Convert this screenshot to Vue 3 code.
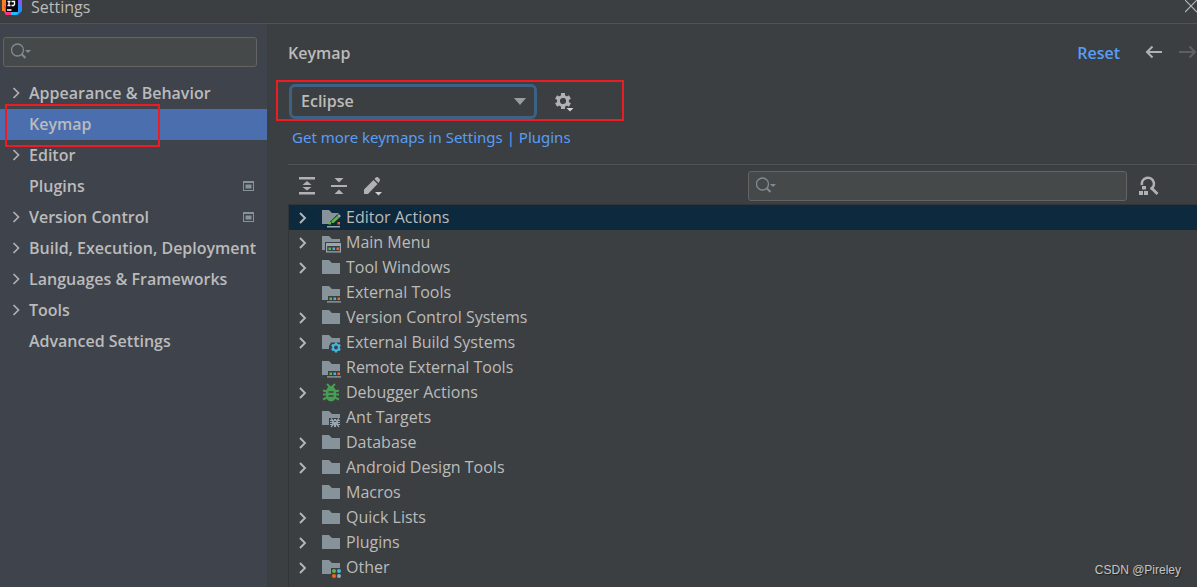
<script setup>
import { ref } from 'vue'

const categories = [
  { label: 'Appearance & Behavior', open: true },
  { label: 'Keymap', selected: true },
  { label: 'Editor', open: true },
  { label: 'Plugins', project: true },
  { label: 'Version Control', open: true, project: true },
  { label: 'Build, Execution, Deployment', open: true },
  { label: 'Languages & Frameworks', open: true },
  { label: 'Tools', open: true },
  { label: 'Advanced Settings' },
]

const actions = [
  { label: 'Editor Actions', open: true, icon: 'editor' },
  { label: 'Main Menu', open: true, icon: 'menu' },
  { label: 'Tool Windows', open: true, icon: 'folder' },
  { label: 'External Tools', icon: 'tools' },
  { label: 'Version Control Systems', open: true, icon: 'folder' },
  { label: 'External Build Systems', open: true, icon: 'build' },
  { label: 'Remote External Tools', icon: 'tools' },
  { label: 'Debugger Actions', open: true, icon: 'bug' },
  { label: 'Ant Targets', icon: 'ant' },
  { label: 'Database', open: true, icon: 'folder' },
  { label: 'Android Design Tools', open: true, icon: 'folder' },
  { label: 'Macros', icon: 'folder' },
  { label: 'Quick Lists', open: true, icon: 'folder' },
  { label: 'Plugins', open: true, icon: 'folder' },
  { label: 'Other', open: true, icon: 'other' },
]

const folderShapes = {
  folder: 'M1 2h7l3 3h8v11H1z',
  editor: 'M1 2h7l3 3h7l-9 9v2H1z',
  menu: 'M1 3h7l3 3h8v3H4v8H1z',
  tools: 'M1 3h7l3 3h8v7H7v4H1z',
  build: 'M1 2h7l3 3h8v4.500h-9L8 13v3H1z',
  ant: 'M1 3h7l3 3h8v4H8v7H1z',
  other: 'M1 2h7l3 3h8v5h-9v6H1z',
}

const keymap = ref('Eclipse')
const settingsQuery = ref('')
const actionQuery = ref('')
</script>

<template>
  <div class="window">
    <header class="titlebar">
      <svg class="logo" width="20" height="15" viewBox="0 0 20 15" aria-hidden="true">
        <path d="M0 0h9v15H4l-2-4H0z" fill="#fc801d" />
        <path d="M2 5l6 5 2 5H4z" fill="#fe2f7d" />
        <path d="M8 0h12l1 10-5 5H9z" fill="#1e8ff5" />
        <path d="M14 0h5v7z" fill="#7a5cf0" />
        <path d="M9 12l8-1-3 4H9z" fill="#18c3fb" />
        <path d="M4 0h12v12H4z" fill="#0b0509" />
        <path d="M5.500 1.500h3M7 1.500v4M5.500 5.500h3M9.500 1.500h3v3l-1 1H9.500M5 10h4.500" fill="none" stroke="#fff" stroke-width="1.300" />
      </svg>
      <h1 class="window-title">Settings</h1>
      <button class="icon-button close" aria-label="Close">
        <svg width="12" height="13" viewBox="0 0 12 13"><path d="M0 0l12 12M12 0L0 12" stroke="#b4b6b7" stroke-width="1.200" /></svg>
      </button>
    </header>

    <div class="body">
      <nav class="sidebar" aria-label="Settings categories">
        <div class="search">
          <svg width="22" height="18" viewBox="0 0 22 18" aria-hidden="true">
            <circle cx="6.500" cy="7" r="6" fill="none" stroke="#7f8b91" stroke-width="1.300" />
            <path d="M10.500 11l4 4" stroke="#7f8b91" stroke-width="2" /><path d="M14 7h6l-3 3z" fill="#7f8b91" />
          </svg>
          <input v-model="settingsQuery" type="text" aria-label="Search settings" />
        </div>
        <ul class="categories">
          <li v-for="item in categories" :key="item.label" :class="{ selected: item.selected }">
            <button class="category">
              <span class="chevron">
                <svg v-if="item.open" width="8" height="12" viewBox="0 0 8 12"><path d="M1.500 1l5 5-5 5" fill="none" stroke="#afb1b3" stroke-width="1.700" /></svg>
              </span>
              <span class="category-label">{{ item.label }}</span>
              <svg v-if="item.project" width="11" height="10" viewBox="0 0 11 10" aria-hidden="true">
                <path d="M0 0h11v10H0zM1 2v7h9V2z" fill="#87939a" fill-rule="evenodd" /><path d="M2.500 3.500h6v4h-6z" fill="#87939a" />
              </svg>
            </button>
            <span v-if="item.selected" class="mark mark-category"></span>
          </li>
        </ul>
      </nav>

      <main class="content">
        <div class="heading">
          <h2>Keymap</h2>
          <button class="reset">Reset</button>
          <button class="icon-button" aria-label="Back">
            <svg width="18" height="14" viewBox="0 0 18 14"><path d="M17 7H2M7.500 1.500L2 7l5.500 5.500" fill="none" stroke="#afb1b3" stroke-width="2" /></svg>
          </button>
          <button class="icon-button forward" aria-label="Forward" disabled>
            <svg width="18" height="14" viewBox="0 0 18 14"><path d="M0 7h16M10.500 1.500L16 7l-5.500 5.500" fill="none" stroke="#5d6062" stroke-width="2" /></svg>
          </button>
        </div>

        <div class="scheme">
          <div class="combo">
            <select v-model="keymap" aria-label="Keymap">
              <option>Eclipse</option>
            </select>
            <svg class="combo-arrow" width="12" height="7" viewBox="0 0 12 7" aria-hidden="true"><path d="M0 0h12L6 7z" fill="#9a9da0" /></svg>
          </div>
          <button class="icon-button" aria-label="Scheme actions">
            <svg width="20" height="20" viewBox="0 0 20 20">
              <path d="M7 1h4v16H7zM1.100 6.700l2-3.400 13.800 8-2 3.400zM1.100 11.300l2 3.400 13.800-8-2-3.400z" fill="#afb1b3" />
              <circle cx="9" cy="9" r="4.500" fill="none" stroke="#afb1b3" stroke-width="3" /><circle cx="9" cy="9" r="3" fill="#3c3f41" />
              <path d="M11.500 15h8v2L16 20l-4.500-3z" fill="#3c3f41" /><path d="M12.500 16h7L16 19.500z" fill="#d0d2d3" />
            </svg>
          </button>
          <span class="mark mark-scheme"></span>
        </div>
        <a class="more" href="#">Get more keymaps in Settings | Plugins</a>

        <div class="toolbar">
          <button class="icon-button" aria-label="Expand all">
            <svg width="16" height="20" viewBox="0 0 16 20"><path d="M0 1h16v2.500H0zM0 16h16v2.500H0zM8 5l4.500 4h-9zM8 14.500L3.500 11h9z" fill="#afb1b3" /></svg>
          </button>
          <button class="icon-button" aria-label="Collapse all">
            <svg width="16" height="20" viewBox="0 0 16 20"><path d="M0 9h16v2H0zM3.500 2h9L8 6.500zM3.500 18h9L8 13.500z" fill="#afb1b3" /></svg>
          </button>
          <button class="icon-button" aria-label="Edit shortcut">
            <svg width="20" height="20" viewBox="0 0 20 20"><path d="M1 18v-4.500L10.500 4l4 4L5 18zM11.500 3L13 1.300q1-.8 2 0l1.700 1.700q.8 1 0 2L15.500 7z" fill="#afb1b3" /><path d="M12 16h7l-3.500 3.500z" fill="#d0d2d3" /></svg>
          </button>
          <div class="search search-actions">
            <svg width="22" height="18" viewBox="0 0 22 18" aria-hidden="true">
              <circle cx="6.500" cy="7" r="6" fill="none" stroke="#7f8b91" stroke-width="1.300" />
              <path d="M10.500 11l4 4" stroke="#7f8b91" stroke-width="2" /><path d="M14 7h6l-3 3z" fill="#7f8b91" />
            </svg>
            <input v-model="actionQuery" type="text" aria-label="Search actions" />
          </div>
          <button class="icon-button" aria-label="Find actions by shortcut">
            <svg width="20" height="20" viewBox="0 0 20 20">
              <path d="M3 9A6 6 0 1 1 11.500 13.200" fill="none" stroke="#afb1b3" stroke-width="2.600" />
              <path d="M12.500 12l6 6" stroke="#afb1b3" stroke-width="2.800" />
              <path d="M3 10h4v3.500H3zM0 15h4v4H0zM5 15h4v4H5z" fill="#afb1b3" />
            </svg>
          </button>
        </div>

        <ul class="tree" role="tree" aria-label="Actions">
          <li v-for="(node, i) in actions" :key="node.label" role="treeitem" :aria-selected="i === 0" :class="{ current: i === 0 }">
            <span class="chevron">
              <svg v-if="node.open" width="8" height="12" viewBox="0 0 8 12"><path d="M1 1l5 5-5 5" fill="none" stroke="#b4b6b7" stroke-width="1.900" /></svg>
            </span>
            <svg class="node-icon" width="20" height="20" viewBox="0 0 20 20" aria-hidden="true">
              <path v-if="folderShapes[node.icon]" :d="folderShapes[node.icon]" fill="#87939a" />
              <g v-if="node.icon === 'editor'">
                <path d="M9 14l7-7 3 3-6 6H8z" fill="#0d293e" />
                <path d="M10.500 15v-2L16 8l2 2-5.500 5z" fill="#62b543" /><path d="M17 7l2 2" stroke="#9aa7b0" stroke-width="2.500" />
                <path d="M7.500 14h2.500v2.500H7.500z" fill="#62b543" /><path d="M16.500 14H19v2.500h-2.500z" fill="#f26522" /><path d="M6 18h13v1.500H6z" fill="#9aa7b0" />
              </g>
              <g v-else-if="node.icon === 'menu'">
                <path d="M5 10h15v9.500H5zM6.200 13v5.300h12.600V13z" fill="#9aa7b0" fill-rule="evenodd" />
                <path d="M7.500 14.500H10V17H7.500z" fill="#62b543" /><path d="M11.500 14.500H14V17h-2.500z" fill="#40b6e0" /><path d="M15.500 14.500H18V17h-2.500z" fill="#f26522" />
              </g>
              <g v-else-if="node.icon === 'tools'">
                <path d="M8.500 14.500H11V17H8.500z" fill="#62b543" /><path d="M12.500 14.500H15V17h-2.500z" fill="#40b6e0" /><path d="M16.500 14.500H19V17h-2.500z" fill="#f26522" />
                <path d="M6 18.300h14v1.200H6z" fill="#9aa7b0" />
              </g>
              <g v-else-if="node.icon === 'build'" fill="none" stroke="#40b6e0">
                <circle cx="15" cy="14.500" r="2.900" stroke-width="2" />
                <path d="M15 9.500v2M15 17.500v2M10.700 12l1.700 1M17.600 16l1.700 1M10.700 17l1.700-1M17.600 13l1.700-1" stroke-width="2.200" />
              </g>
              <g v-else-if="node.icon === 'bug'">
                <path d="M6 1l3 3M14 1l-3 3M2 7.500l4 1M18 7.500l-4 1M2 11.500h16M2 16.500l4-2M18 16.500l-4-2" fill="none" stroke="#499c54" stroke-width="2" />
                <path d="M6 6q1-3 4-3t4 3l1 1v7q-1 4-5 4.500Q6 18 5 14V7z" fill="#499c54" /><path d="M7.500 9h5M7.500 13h5" stroke="#3c3f41" stroke-width="1.300" />
              </g>
              <g v-else-if="node.icon === 'ant'" fill="none" stroke="#9aa7b0" stroke-width="1.200">
                <path d="M9 14.500h10M10 10.500l3 3M18 10.500l-3 3M10 19l3-3.500M18 19l-3-3.500M9 12.500h2l2 2-2 2H9M19 12.500h-2l-2 2 2 2h2" /><path d="M14 11v2M14 15v4" stroke-width="2" />
              </g>
              <g v-else-if="node.icon === 'other'">
                <circle cx="13" cy="13" r="2" fill="#62b543" /><circle cx="18" cy="13" r="2" fill="#40b6e0" />
                <circle cx="13" cy="18" r="2" fill="#f26522" /><circle cx="18" cy="18" r="2" fill="#9aa7b0" />
              </g>
            </svg>
            <span class="node-label">{{ node.label }}</span>
          </li>
        </ul>
      </main>
    </div>
    <p class="credit">CSDN @Pireley</p>
  </div>
</template>

<style>
body {
  margin: 0;
  background: #3c3f41;
}
</style>

<style scoped>
.window {
  position: relative;
  display: flex;
  flex-direction: column;
  height: 100vh;
  overflow: hidden;
  background: #3c3f41;
  color: #bbbbbb;
  font: 16px/24px "Open Sans", "Noto Sans", sans-serif;
}
ul {
  list-style: none;
  margin: 0;
  padding: 0;
}
button {
  padding: 0;
  border: 0;
  background: none;
  color: inherit;
  font: inherit;
}
svg {
  display: block;
  flex: none;
}
h1, h2 {
  margin: 0;
}
.icon-button {
  display: flex;
  flex: none;
}
.titlebar {
  display: flex;
  align-items: flex-start;
  flex: none;
  height: 23px;
  padding-left: 2px;
  border-bottom: 1px solid #515456;
}
.window-title {
  flex: 1;
  margin-left: 9px;
  font-size: 16px;
  font-weight: 400;
  line-height: 14px;
}
.body {
  display: flex;
  flex: 1;
  min-height: 0;
}
.sidebar {
  flex: none;
  width: 267px;
  background: #3f434c;
}
.search {
  display: flex;
  align-items: center;
  box-sizing: border-box;
  height: 30px;
  margin: 13px 10px 11px 3px;
  padding-left: 7px;
  border: 1px solid #646464;
  border-radius: 3px;
  background: #45494a;
}
.search input {
  flex: 1;
  min-width: 0;
  padding: 0 4px;
  border: 0;
  outline: 0;
  background: none;
  color: inherit;
  font: inherit;
}
.categories li {
  position: relative;
  height: 31px;
}
.categories .selected {
  background: #4b6eaf;
}
.category {
  display: flex;
  align-items: center;
  box-sizing: border-box;
  width: 100%;
  height: 100%;
  padding: 0 13px 2px 12px;
  font-weight: 600;
  text-align: left;
  white-space: nowrap;
}
.category .chevron {
  width: 17px;
}
.category-label {
  flex: 1;
}
.chevron {
  flex: none;
}
.mark {
  position: absolute;
  box-sizing: border-box;
  border: 2px solid #ed1c24;
  pointer-events: none;
  z-index: 1;
}
.mark-category {
  left: 5px;
  top: -5px;
  width: 155px;
  height: 43px;
}
.mark-scheme {
  left: -12px;
  top: -4px;
  width: 348px;
  height: 41px;
}
.content {
  display: flex;
  flex: 1;
  flex-direction: column;
  min-width: 0;
  padding-left: 21px;
}
.heading {
  display: flex;
  align-items: center;
  flex: none;
  height: 56px;
  margin-bottom: 4px;
}
.heading h2 {
  flex: 1;
  font-size: 16px;
  font-weight: 600;
}
.reset {
  margin-right: 25px;
  color: #589df6;
  font-weight: 600;
}
.heading h2,
.reset {
  padding-top: 2px;
}
.forward {
  margin-left: 16px;
}
.scheme {
  position: relative;
  display: flex;
  align-items: center;
  gap: 17px;
  height: 35px;
}
.combo {
  display: grid;
  align-items: center;
  width: 248px;
  margin-left: 1px;
}
.combo select,
.combo-arrow {
  grid-area: 1 / 1;
}
.combo select {
  box-sizing: border-box;
  width: 100%;
  height: 35px;
  padding: 0 30px 2px 9px;
  border: 3px solid #3d6185;
  border-radius: 6px;
  outline: 0;
  appearance: none;
  background: #3c3f41;
  color: inherit;
  font: 600 16px/24px "Open Sans", "Noto Sans", sans-serif;
}
.combo-arrow {
  justify-self: end;
  margin-right: 11px;
  pointer-events: none;
}
.more {
  align-self: flex-start;
  margin: 6px 0 15px 4px;
  color: #589df6;
  font-family: "Noto Sans", "Open Sans", sans-serif;
  font-size: 15px;
  text-decoration: none;
}
.toolbar {
  display: flex;
  align-items: center;
  gap: 16px;
  flex: none;
  box-sizing: border-box;
  height: 40px;
  padding: 2px 38px 0 11px;
  border-top: 1px solid #515456;
}
.search-actions {
  flex: 1;
  margin: 0 -4px 0 auto;
  max-width: 379px;
}
.tree {
  flex: 1;
  border: solid #323537;
  border-width: 1px 0 0 1px;
}
.tree li {
  display: flex;
  align-items: center;
  height: 25px;
  padding-left: 10px;
  white-space: nowrap;
}
.tree .current {
  background: #0d293e;
}
.tree .chevron {
  width: 22px;
}
.node-icon {
  margin-right: 5px;
}
.node-label {
  padding-bottom: 2px;
}
.credit {
  position: absolute;
  right: 16px;
  bottom: 8px;
  margin: 0;
  color: #c4c5c6;
  font: 12px/18px "Liberation Sans", Arial, sans-serif;
  text-shadow: 1px 1px 1px #222222;
}
</style>
